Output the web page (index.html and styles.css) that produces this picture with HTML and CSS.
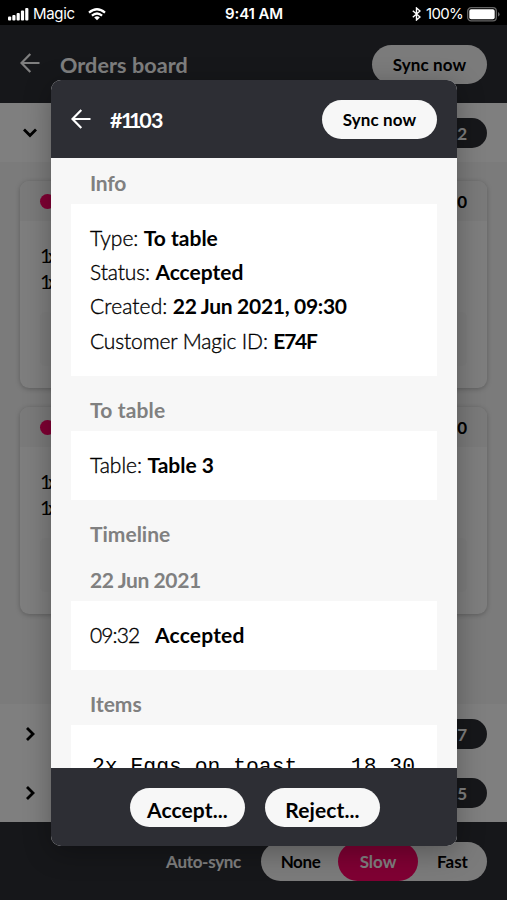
FILE: index.html
```html
<!DOCTYPE html>
<html lang="en">
<head>
<meta charset="utf-8">
<title>Orders board</title>
<link rel="stylesheet" href="styles.css">
</head>
<body>
<div class="phone">
  <div class="status">
    <div class="status-left">
      <svg class="signal" width="21" height="13" viewBox="0 0 21 13" fill="#fff"><rect x="0" y="8.5" width="3.2" height="4" rx="1"/><rect x="4.3" y="7" width="3.2" height="5.5" rx="1"/><rect x="8.6" y="5" width="3.2" height="7.5" rx="1"/><rect x="12.9" y="2.5" width="3.2" height="10" rx="1"/><rect x="17.2" y="0" width="3.2" height="12.5" rx="1"/></svg>
      <span class="carrier">Magic</span>
      <svg class="wifi" width="18" height="13" viewBox="0 0 18 13" fill="none" stroke="#fff" stroke-width="2.2"><path d="M1 4.7Q9-2.2 17 4.7"/><path d="M3.9 7.7Q9 3.3 14.1 7.7"/><path d="M9 12.2 6.2 9.4Q9 7.2 11.8 9.4Z" fill="#fff" stroke="none"/></svg>
    </div>
    <span class="clock">9:41 AM</span>
    <div class="status-right">
      <svg width="9" height="14" viewBox="0 0 9 14" fill="none" stroke="#fff" stroke-width="1.4"><path d="M.8 3.8 8 10 4.5 13V1L8 4 .8 10.2"/></svg>
      <span class="percent">100%</span>
      <svg width="33" height="15" viewBox="0 0 33 15"><rect x=".7" y=".7" width="28.6" height="13.2" rx="3.4" fill="none" stroke="#666" stroke-width="1.3"/><rect x="2.3" y="2.3" width="25.4" height="10" rx="1.8" fill="#fff"/><path d="M31 5v4.6q1.6-.7 1.6-2.3T31 5z" fill="#666"/></svg>
    </div>
  </div>
  <div class="app">
    <header class="bar">
      <svg class="back" width="20" height="20" viewBox="0 0 20 20"><path d="M19.5 10H2M10.3 1 1.5 10l8.8 9"/></svg>
      <h1 class="title board-title">Orders board</h1>
      <button class="pill sync">Sync now</button>
    </header>
    <main class="board">
      <div class="group">
        <svg class="chev" width="16" height="16" viewBox="0 0 16 16"><path d="M2 4.5 8 10.5l6-6"/></svg>
        <span class="count">2</span>
      </div>
      <div class="cards">
        <article class="card">
          <div class="card-head"><i class="dot"></i><b>09:30</b></div>
          <div class="card-body"><p>1x</p><p>1x</p><div class="note"></div></div>
        </article>
        <article class="card">
          <div class="card-head"><i class="dot"></i><b>09:30</b></div>
          <div class="card-body"><p>1x</p><p>1x</p><div class="note"></div></div>
        </article>
      </div>
      <div class="group">
        <svg class="chev" width="16" height="16" viewBox="0 0 16 16"><path d="M5 2l6 6-6 6"/></svg>
        <span class="count">7</span>
      </div>
      <div class="group">
        <svg class="chev" width="16" height="16" viewBox="0 0 16 16"><path d="M5 2l6 6-6 6"/></svg>
        <span class="count">5</span>
      </div>
    </main>
    <footer class="bar foot">
      <span class="auto">Auto-sync</span>
      <div class="segments"><span class="none">None</span><span class="slow">Slow</span><span class="fast">Fast</span></div>
    </footer>
  </div>
  <div class="shade"></div>
  <section class="modal">
    <header class="bar modal-bar">
      <svg class="back" width="20" height="20" viewBox="0 0 20 20"><path d="M19.5 10H2M10.3 1 1.5 10l8.8 9"/></svg>
      <h2 class="title order-title">#<span class="ones">11</span>03</h2>
      <button class="pill sync">Sync now</button>
    </header>
    <div class="content">
      <h3 class="h-info">Info</h3>
      <div class="box info">
        <p><span class="k-type">Type:</span> <b class="v-type">To table</b></p>
        <p><span class="k-status">Status:</span> <b class="v-status">Accepted</b></p>
        <p><span class="k-created">Created:</span> <b class="v-created">22 Jun 2021, 09:30</b></p>
        <p><span class="k-customer">Customer Magic ID:</span> <b class="v-customer">E74F</b></p>
      </div>
      <h3 class="h-table">To table</h3>
      <div class="box"><p><span class="k-table">Table:</span> <b class="v-table">Table 3</b></p></div>
      <h3 class="h-time">Timeline</h3>
      <h3 class="h-date">22 Jun 2021</h3>
      <div class="box"><p><span class="k-time">09:32</span><b class="v-time">Accepted</b></p></div>
      <h3 class="h-items">Items</h3>
      <div class="box receipt"><span>2x Eggs on toast</span><span>18.30</span></div>
    </div>
    <footer class="actions">
      <button class="pill accept">Accept...</button>
      <button class="pill reject">Reject...</button>
    </footer>
  </section>
</div>
</body>
</html>
```
FILE: styles.css
```css
* { box-sizing: border-box; }
body, h1, h2, h3, p { margin: 0; }
body { width: 507px; height: 900px; overflow: hidden; background: #000; font-family: Lato, "Liberation Sans", sans-serif; color: #000; }
.phone { position: relative; height: 900px; display: flex; flex-direction: column; }
.status { height: 25px; background: #000; color: #fff; display: grid; grid-template-columns: 1fr auto 1fr; align-items: center; padding: 3px 7px 0 8px; font-family: Inter, sans-serif; font-size: 15px; line-height: 20px; }
.status-left, .status-right { display: flex; align-items: center; }
.status-right { justify-content: flex-end; }
.signal { margin-right: 4px; }
.carrier { width: 41px; letter-spacing: -.3px; }
.wifi { margin-left: 14px; }
.clock { font-weight: 600; letter-spacing: -.1px; }
.percent { margin: 0 4px 0 5px; letter-spacing: -.7px; }
.app { flex: 1; display: flex; flex-direction: column; }
.bar { height: 78px; flex: none; background: #2d2e34; color: #fff; display: flex; align-items: center; padding: 0 20px; }
.back { fill: none; stroke: #fff; stroke-width: 2.2; margin: -3px 20px 0 0; }
.modal-bar .back { margin-top: 0; }
.title { font-size: 21.5px; font-weight: 700; line-height: 26px; flex: 1; padding-top: 2px; }
.board-title { letter-spacing: .1px; }
.order-title { letter-spacing: -.8px; margin-left: -1px; }
.ones { letter-spacing: -4.2px; margin: 0 2px 0 -1px; }
.pill { border: 0; border-radius: 20px; width: 115px; height: 39px; padding: 0; background: #f7f7f7; color: #000; font-family: inherit; font-weight: 700; text-align: center; }
.sync { font-size: 17px; letter-spacing: .1px; }
.board { flex: 1; background: #f6f6f6; display: flex; flex-direction: column; }
.group { height: 59px; background: #fff; display: flex; align-items: center; justify-content: space-between; padding: 0 20px 0 22px; }
.chev { fill: none; stroke: #000; stroke-width: 2.8; }
.count { width: 56px; height: 30px; border-radius: 15px; background: #2d2e34; color: #fff; font-size: 17px; font-weight: 700; line-height: 32px; text-align: right; padding-right: 20px; }
.cards { flex: 1; padding: 19px 20px 0; display: flex; flex-direction: column; gap: 19px; }
.card { height: 207px; border-radius: 9px; background: #fcfcfc; box-shadow: 0 1px 5px rgba(0,0,0,.25); overflow: hidden; }
.card-head { height: 40px; background: #f4f4f4; padding: 0 20px; display: flex; align-items: center; justify-content: space-between; font-size: 17px; }
.dot { width: 15px; height: 15px; border-radius: 50%; background: #f06; }
.card-body { padding: 22px 20px 0; font-size: 20px; line-height: 25.5px; letter-spacing: -3.5px; }
.note { height: 54px; margin-top: 18px; border-radius: 5px; background: #f9f9f9; }
.foot { justify-content: flex-end; }
.auto { font-size: 17px; font-weight: 700; margin-right: 20px; letter-spacing: -.3px; }
.segments { width: 226px; height: 39px; border-radius: 20px; background: #f7f7f7; color: #000; display: grid; grid-template-columns: 77px 80px 69px; font-size: 17px; font-weight: 700; line-height: 39px; text-align: center; }
.none { letter-spacing: -.4px; padding-left: 2px; }
.slow { background: #f06; color: #fff; border-radius: 20px; }
.shade { position: absolute; inset: 25px 0 0; background: rgba(0,0,0,.5); }
.modal { position: absolute; left: 51px; top: 80px; width: 406px; height: 766px; border-radius: 10px; overflow: hidden; background: #f7f7f7; box-shadow: 0 6px 28px rgba(0,0,0,.3); display: flex; flex-direction: column; }
.content { flex: 1; min-height: 0; overflow: hidden; padding: 0 20px; }
h3 { font-size: 21px; line-height: 26px; font-weight: 700; color: #808080; padding-left: 19px; }
.h-info { margin: 12px 0 8px; letter-spacing: -.2px; }
.h-table, .h-time, .h-items { margin: 21px 0 8px; }
.h-table { letter-spacing: .15px; }
.h-date { margin: 20px 0 8px; letter-spacing: -.4px; }
.box { background: #fff; height: 69px; padding: 17px 19px; font-size: 21px; line-height: 34.2px; white-space: nowrap; }
.box span { font-weight: 300; -webkit-text-stroke: .35px #000; }
.info { height: 172px; }
.k-status { letter-spacing: -.1px; }
.k-created { letter-spacing: .1px; }
.v-created { letter-spacing: -.3px; }
.k-customer { letter-spacing: -.13px; }
.v-customer { letter-spacing: -1.2px; }
.v-time { letter-spacing: .2px; }
.k-time { display: inline-block; width: 65px; letter-spacing: -.9px; }
.box.receipt { display: flex; justify-content: space-between; padding: 25px 22px 0 21px; font-family: "Liberation Mono", monospace; font-size: 21.4px; }
.box.receipt span { -webkit-text-stroke: 0; }
.actions { height: 78px; flex: none; background: #2d2e34; display: flex; justify-content: center; gap: 20px; padding-top: 20px; padding-left: 2px; }
.actions .pill { font-size: 21px; padding-top: 4px; letter-spacing: .1px; }
```
